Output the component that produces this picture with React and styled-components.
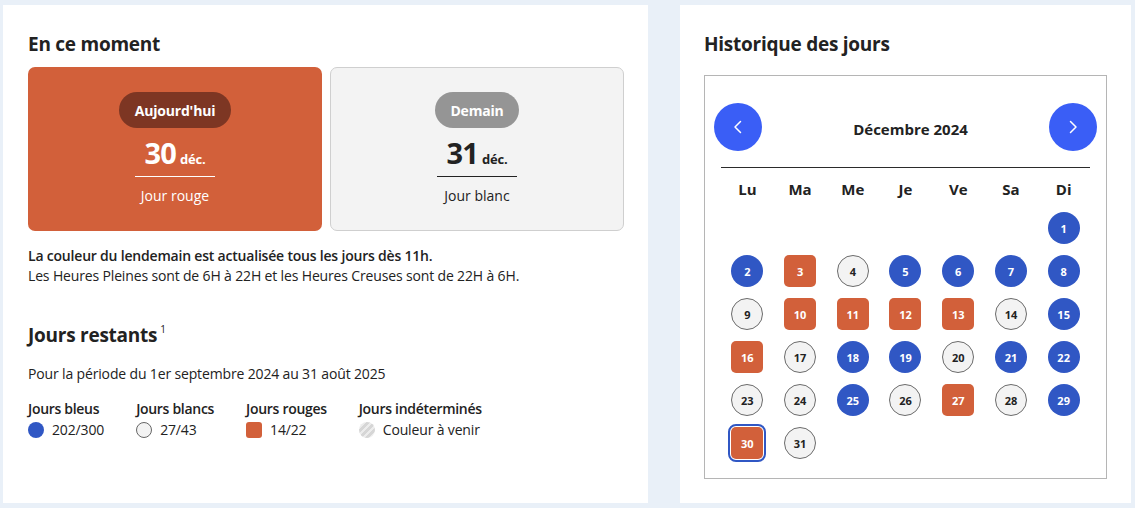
import React from "react";
import styled, { createGlobalStyle } from "styled-components";

const GlobalStyle = createGlobalStyle`
  html, body { margin: 0; padding: 0; background: #e9f0f8; }
  body { font-family: "Open Sans", "Noto Sans", sans-serif; color: #222; }
  * { box-sizing: border-box; }
`;

const Page = styled.div`
  display: flex;
  gap: 32px;
  padding: 5px 4px 5px 3px;
  height: 508px;
`;

const Panel = styled.section`
  background: #fff;
  width: ${(p) => p.$w}px;
  padding: 26px 24px 0 ${(p) => p.$pl}px;
  display: flex;
  flex-direction: column;
`;

const Title = styled.h2`
  margin: ${(p) => p.$mt || 0}px 0 0;
  font-size: 19px;
  font-weight: 700;
  line-height: 26px;
  color: #222;
  letter-spacing: -0.25px;
`;

const Sup = styled.sup`
  font-size: 10px;
  font-weight: 400;
  vertical-align: top;
  position: relative;
  top: -6px;
  margin-left: 3px;
  letter-spacing: 0;
`;

const Cards = styled.div`
  display: grid;
  grid-template-columns: 1fr 1fr;
  gap: 8px;
  margin-top: 10px;
`;

const DayCard = styled.div`
  height: 164px;
  border-radius: 7px;
  background: ${(p) => (p.$red ? "#d2603a" : "#f3f3f3")};
  border: ${(p) => (p.$red ? "none" : "1px solid #cfcfcf")};
  color: ${(p) => (p.$red ? "#fff" : "#222")};
  display: flex;
  flex-direction: column;
  align-items: center;
  padding-top: ${(p) => (p.$red ? 25 : 24)}px;
`;

const Pill = styled.div`
  height: 36px;
  padding: 0 ${(p) => p.$px}px;
  border-radius: 18px;
  background: ${(p) => p.$bg};
  color: #fff;
  font-weight: 700;
  font-size: 14px;
  letter-spacing: -0.2px;
  display: flex;
  align-items: center;
`;

const DateRow = styled.div`
  display: flex;
  align-items: baseline;
  justify-content: center;
  gap: 4px;
  margin-top: 5px;
  height: 44px;
  padding-bottom: 4px;
  width: 80px;
  border-bottom: 1px solid ${(p) => (p.$red ? "#fff" : "#222")};
`;

const BigNum = styled.span`
  font-size: 29px;
  font-weight: 700;
  line-height: 40px;
  letter-spacing: -0.8px;
`;

const Month = styled.span`
  font-size: 13px;
  font-weight: 700;
  letter-spacing: -0.2px;
`;

const DayLabel = styled.div`
  margin-top: 9px;
  font-size: 14px;
  font-weight: 400;
  line-height: 20px;
`;

const Info = styled.p`
  margin: ${(p) => p.$mt || 0}px 0 0;
  font-size: 14px;
  line-height: 20px;
  font-weight: ${(p) => (p.$bold ? 600 : 400)};
  letter-spacing: ${(p) => (p.$bold ? "-0.2px" : "-0.15px")};
  color: #222;
`;

const Legend = styled.div`
  display: flex;
  gap: 32px;
  margin-top: 15px;
  font-size: 14px;
`;

const LegendItem = styled.div`
  display: flex;
  flex-direction: column;
  gap: 1px;
`;

const LegendHead = styled.div`
  font-weight: 600;
  line-height: 20px;
  letter-spacing: -0.3px;
`;

const LegendValue = styled.div`
  display: flex;
  align-items: center;
  gap: 8px;
  line-height: 20px;
  letter-spacing: -0.15px;
`;

const Swatch = styled.span`
  width: 16px;
  height: 16px;
  flex: none;
  border-radius: ${(p) => (p.$kind === "red" ? "3px" : "50%")};
  background: ${(p) =>
    p.$kind === "blue"
      ? "#3057c4"
      : p.$kind === "red"
      ? "#d2603a"
      : p.$kind === "white"
      ? "#f3f3f3"
      : "repeating-linear-gradient(135deg, #d6d6d6 0 3px, #ececec 3px 5px)"};
  border: ${(p) => (p.$kind === "white" ? "1px solid #666" : "none")};
`;

const CalBox = styled.div`
  margin-top: 18px;
  border: 1px solid #b5b5b5;
  width: 403px;
  padding: 27px 0 19px;
`;

const CalHeader = styled.div`
  display: flex;
  align-items: center;
  justify-content: space-between;
  padding: 0 9px;
`;

const NavBtn = styled.button`
  width: 48px;
  height: 48px;
  border-radius: 50%;
  border: none;
  background: #3a5ef6;
  display: flex;
  align-items: center;
  justify-content: center;
  padding: 0;
  cursor: pointer;
`;

const MonthTitle = styled.div`
  font-size: 15px;
  font-weight: 700;
  color: #222;
  padding: 4px 0 0 10px;
`;

const Divider = styled.div`
  margin: 16px 16px 0;
  height: 1px;
  background: #2b2b2b;
`;

const Grid = styled.div`
  display: grid;
  grid-template-columns: repeat(7, 1fr);
  padding: 0 16px;
  row-gap: 11px;
  justify-items: center;
  margin-top: ${(p) => p.$mt}px;
`;

const WeekDay = styled.div`
  font-size: 15px;
  font-weight: 700;
  line-height: 20px;
  color: #222;
`;

const Day = styled.div`
  width: 32px;
  height: 32px;
  display: flex;
  align-items: center;
  justify-content: center;
  font-size: 11px;
  font-weight: 700;
  border-radius: ${(p) => (p.$c === "r" ? "5px" : "50%")};
  background: ${(p) => (p.$c === "b" ? "#3057c4" : p.$c === "r" ? "#d2603a" : "#f3f3f3")};
  color: ${(p) => (p.$c === "w" ? "#222" : "#fff")};
  border: ${(p) => (p.$c === "w" ? "1px solid #6b6b6b" : "none")};
  outline: ${(p) => (p.$sel ? "2px solid #3057c4" : "none")};
  outline-offset: 1px;
`;

const Chevron = ({ dir }) => (
  <svg width="24" height="24" viewBox="0 0 24 24" fill="none" stroke="#fff" strokeWidth="1.5" strokeLinecap="round" strokeLinejoin="round">
    {dir === "left" ? <path d="M14.5 6.5 9 12l5.5 5.5" /> : <path d="M9.5 6.5 15 12l-5.5 5.5" />}
  </svg>
);

const colors = {
  1: "b", 2: "b", 3: "r", 4: "w", 5: "b", 6: "b", 7: "b", 8: "b",
  9: "w", 10: "r", 11: "r", 12: "r", 13: "r", 14: "w", 15: "b",
  16: "r", 17: "w", 18: "b", 19: "b", 20: "w", 21: "b", 22: "b",
  23: "w", 24: "w", 25: "b", 26: "w", 27: "r", 28: "w", 29: "b",
  30: "r", 31: "w",
};

const weekDays = ["Lu", "Ma", "Me", "Je", "Ve", "Sa", "Di"];

const legend = [
  ["Jours bleus", "blue", "202/300"],
  ["Jours blancs", "white", "27/43"],
  ["Jours rouges", "red", "14/22"],
  ["Jours indéterminés", "unknown", "Couleur à venir"],
];

export default function App() {
  const cells = [];
  for (let i = 0; i < 6; i++) cells.push(<span key={"e" + i} />);
  for (let d = 1; d <= 31; d++)
    cells.push(
      <Day key={d} $c={colors[d]} $sel={d === 30}>
        {d}
      </Day>
    );

  return (
    <>
      <GlobalStyle />
      <Page>
        <Panel $w={645} $pl={25}>
          <Title>En ce moment</Title>
          <Cards>
            <DayCard $red>
              <Pill $bg="#7d3623" $px={16}>Aujourd'hui</Pill>
              <DateRow $red>
                <BigNum>30</BigNum>
                <Month>déc.</Month>
              </DateRow>
              <DayLabel>Jour rouge</DayLabel>
            </DayCard>
            <DayCard>
              <Pill $bg="#959595" $px={15}>Demain</Pill>
              <DateRow>
                <BigNum>31</BigNum>
                <Month>déc.</Month>
              </DateRow>
              <DayLabel>Jour blanc</DayLabel>
            </DayCard>
          </Cards>
          <Info $bold $mt={15}>
            La couleur du lendemain est actualisée tous les jours dès 11h.
          </Info>
          <Info>Les Heures Pleines sont de 6H à 22H et les Heures Creuses sont de 22H à 6H.</Info>
          <Title $mt={36}>
            Jours restants<Sup>1</Sup>
          </Title>
          <Info $mt={16}>Pour la période du 1er septembre 2024 au 31 août 2025</Info>
          <Legend>
            {legend.map(([head, kind, value]) => (
              <LegendItem key={kind}>
                <LegendHead>{head}</LegendHead>
                <LegendValue>
                  <Swatch $kind={kind} />
                  {value}
                </LegendValue>
              </LegendItem>
            ))}
          </Legend>
        </Panel>
        <Panel $w={451} $pl={24}>
          <Title>Historique des jours</Title>
          <CalBox>
            <CalHeader>
              <NavBtn aria-label="Mois précédent">
                <Chevron dir="left" />
              </NavBtn>
              <MonthTitle>Décembre 2024</MonthTitle>
              <NavBtn aria-label="Mois suivant">
                <Chevron dir="right" />
              </NavBtn>
            </CalHeader>
            <Divider />
            <Grid $mt={11}>
              {weekDays.map((w) => (
                <WeekDay key={w}>{w}</WeekDay>
              ))}
            </Grid>
            <Grid $mt={13}>{cells}</Grid>
          </CalBox>
        </Panel>
      </Page>
    </>
  );
}
